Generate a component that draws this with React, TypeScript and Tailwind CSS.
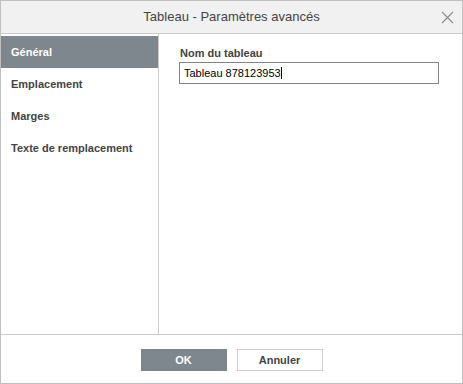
import React from "react";

const items = ["Général", "Emplacement", "Marges", "Texte de remplacement"];

export default function App() {
  return (
    <div
      className="w-[463px] h-[384px] border border-[#c0c0c0] bg-white flex flex-col text-[#444]"
      style={{ fontFamily: '"Liberation Sans", Arial, sans-serif' }}
    >
      <div className="h-[33px] shrink-0 bg-[#f1f1f1] border-b border-[#cbcbcb] relative flex items-center justify-center">
        <span className="text-[13px] text-[#444]">Tableau - Paramètres avancés</span>
        <svg
          className="absolute left-[440px] top-[10px]"
          width="13"
          height="13"
          viewBox="0 0 13 13"
        >
          <path d="M1 1 L12 12 M12 1 L1 12" stroke="#8a8a8a" strokeWidth="1.1" fill="none" />
        </svg>
      </div>
      <div className="flex flex-1 min-h-0">
        <div className="w-[158px] shrink-0 border-r border-[#cbcbcb] pt-[2px] flex flex-col">
          {items.map((it, i) => (
            <div
              key={it}
              className={
                i === 0
                  ? "h-[32px] flex items-center pl-[10px] text-[11px] font-bold bg-[#7e868e] text-white"
                  : "h-[32px] flex items-center pl-[10px] text-[11px] font-bold text-[#444]"
              }
            >
              {it}
            </div>
          ))}
        </div>
        <div className="flex-1 pl-[20px] pt-[13px]">
          <div className="pl-[1px] text-[11px] font-bold text-[#444] leading-[13px] mb-[2px]">Nom du tableau</div>
          <div className="w-[260px] h-[22px] border border-[#848484] flex items-center pl-[4px] text-[11px] text-black">
            <span>Tableau 878123953</span>
            <span className="inline-block w-px h-[12px] bg-black" />
          </div>
        </div>
      </div>
      <div className="h-[49px] shrink-0 border-t border-[#cbcbcb] flex justify-center gap-[10px] pt-[14px]">
        <div className="w-[86px] h-[22px] bg-[#7e868e] text-white text-[11px] font-bold flex items-center justify-center">
          OK
        </div>
        <div className="w-[86px] h-[22px] bg-white border border-[#cfcfcf] text-[#444] text-[11px] font-bold flex items-center justify-center">
          Annuler
        </div>
      </div>
    </div>
  );
}
